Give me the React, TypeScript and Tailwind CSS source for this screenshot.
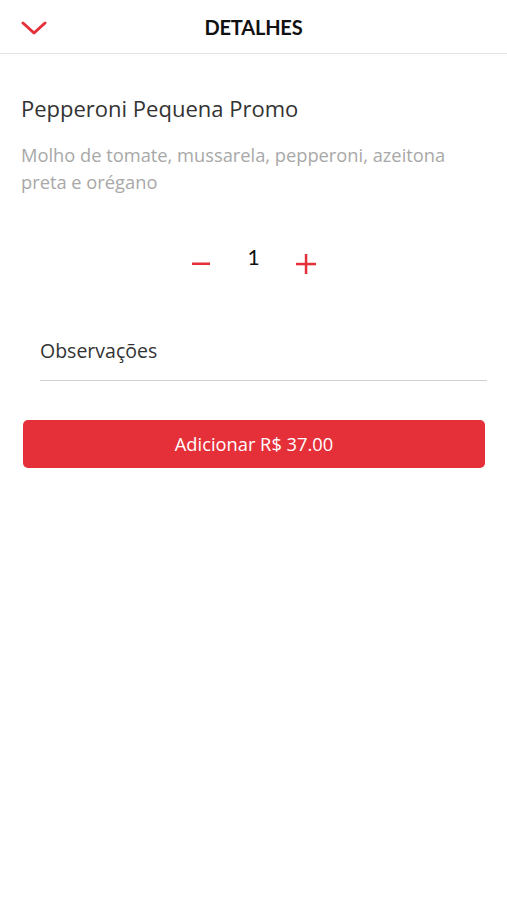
import React, { useState } from 'react';

export default function App() {
  const [qty, setQty] = useState(1);

  return (
    <div className="min-h-[900px] bg-white text-[#222] font-['Open_Sans','Noto_Sans',sans-serif]">
      {/* Header */}
      <header className="relative h-[54px] flex items-center justify-center border-b border-[#e4e4e4]">
        <button className="absolute left-[21px] top-[20px] text-[#e5303a]">
          <svg width="26" height="16" viewBox="0 0 26 16" fill="none">
            <path d="M2 3l11 10L24 3" stroke="currentColor" strokeWidth="3" strokeLinecap="round" strokeLinejoin="round" />
          </svg>
        </button>
        <h1 className="font-['Lato',sans-serif] text-[20px] font-bold tracking-[-0.2px] text-[#111] mt-[1px]">DETALHES</h1>
      </header>

      <main className="px-[21px]">
        <h2 className="mt-[39px] text-[22px] leading-[30px] text-[#333]">Pepperoni Pequena Promo</h2>
        <p className="mt-[18px] text-[18.3px] leading-[27px] text-[#a8a8a8] pr-[26px]">
          Molho de tomate, mussarela, pepperoni, azeitona preta e orégano
        </p>

        {/* Quantity */}
        <div className="mt-[45px] flex items-center justify-center gap-[38px]">
          <button onClick={() => setQty(Math.max(1, qty - 1))} className="text-[#e5303a] mt-[14px]">
            <svg width="18" height="4" viewBox="0 0 18 4">
              <rect x="0" y="0.5" width="18" height="2.5" fill="currentColor" />
            </svg>
          </button>
          <span className="font-['Lato',sans-serif] text-[21px] leading-[24px] text-[#111] w-[10px] text-center">{qty}</span>
          <button onClick={() => setQty(qty + 1)} className="text-[#e5303a] mt-[14px]">
            <svg width="20" height="20" viewBox="0 0 20 20">
              <rect x="0" y="8.8" width="20" height="2.5" fill="currentColor" />
              <rect x="8.8" y="0" width="2.5" height="20" fill="currentColor" />
            </svg>
          </button>
        </div>

        {/* Observações */}
        <div className="mt-[64px] ml-[19px] mr-[-1px] border-b border-[#cfcfcf] pb-[16px]">
          <span className="text-[19.5px] leading-[26px] text-[#333]">Observações</span>
        </div>

        <button className="mt-[39px] ml-[2px] w-[462px] h-[48px] rounded-[5px] bg-[#e5303a] text-white text-[18.3px] flex items-center justify-center">
          Adicionar R$ 37.00
        </button>
      </main>
    </div>
  );
}
